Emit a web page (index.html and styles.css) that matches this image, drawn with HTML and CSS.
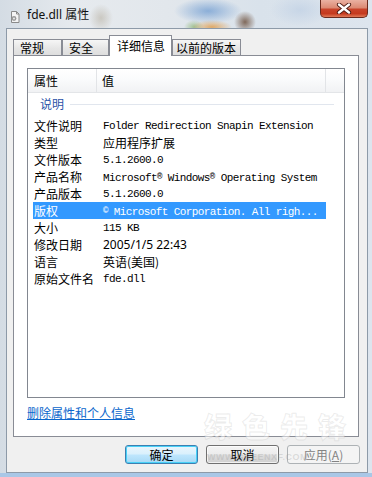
FILE: index.html
```html
<!DOCTYPE html>
<html lang="zh-CN">
<head>
<meta charset="utf-8">
<title>fde.dll 属性</title>
<link rel="stylesheet" href="styles.css">
</head>
<body>
<div class="window">
  <div class="titlebar">
    <svg class="ticon" width="12" height="12" viewBox="0 0 12 12">
      <path d="M2.5 0.5h5l2.5 2.5v8.5h-7.5z" fill="#f4f4f4" stroke="#8a8a8a"/>
      <path d="M7.5 0.5v2.5h2.5" fill="none" stroke="#8a8a8a"/>
      <circle cx="5" cy="7.5" r="2.4" fill="#9a9a9a"/>
      <circle cx="5" cy="7.5" r="0.9" fill="#f4f4f4"/>
    </svg>
    <span class="title">fde.dll 属性</span>
    <div class="close">
      <svg width="16" height="11" viewBox="0 0 16 11">
        <path d="M3 1.5l10 8M13 1.5l-10 8" stroke="#4a1810" stroke-width="4.2" stroke-linecap="round"/>
        <path d="M3 1.5l10 8M13 1.5l-10 8" stroke="#ffffff" stroke-width="2.4" stroke-linecap="round"/>
      </svg>
    </div>
  </div>
  <div class="client">
    <div class="tabs">
      <div class="tab t1">常规</div>
      <div class="tab t2">安全</div>
      <div class="tab sel t3">详细信息</div>
      <div class="tab t4">以前的版本</div>
    </div>
    <div class="panel">
      <div class="list">
        <div class="lhead">
          <div class="hc hc1">属性</div>
          <div class="hc hc2">值</div>
          <div class="hc hc3"></div>
        </div>
        <div class="group"><span class="gtext">说明</span><span class="gline"></span></div>
        <div class="row"><div class="k">文件说明</div><div class="v mono">Folder Redirection Snapin Extension</div></div>
        <div class="row"><div class="k">类型</div><div class="v cjk">应用程序扩展</div></div>
        <div class="row"><div class="k">文件版本</div><div class="v mono">5.1.2600.0</div></div>
        <div class="row"><div class="k">产品名称</div><div class="v mono">Microsoft<span class="reg">®</span> Windows<span class="reg">®</span> Operating System</div></div>
        <div class="row"><div class="k">产品版本</div><div class="v mono">5.1.2600.0</div></div>
        <div class="row selrow"><div class="k">版权</div><div class="v mono"><span class="reg">©</span> Microsoft Corporation. All righ...</div></div>
        <div class="row"><div class="k">大小</div><div class="v mono">115 KB</div></div>
        <div class="row"><div class="k">修改日期</div><div class="v sans">2005/1/5 22:43</div></div>
        <div class="row"><div class="k">语言</div><div class="v cjk">英语(美国)</div></div>
        <div class="row"><div class="k">原始文件名</div><div class="v mono">fde.dll</div></div>
      </div>
      <a class="link" href="#">删除属性和个人信息</a>
    </div>
    <div class="buttons">
      <div class="btn default">确定</div>
      <div class="btn">取消</div>
      <div class="btn disabled">应用(<u>A</u>)</div>
    </div>
  </div>
  <div class="watermark">绿色先锋</div>
  <div class="watermark2">WWW.GREENXF.COM</div>
</div>
</body>
</html>
```
FILE: styles.css
```css
html, body {
  margin: 0;
  padding: 0;
}
body {
  width: 372px;
  height: 477px;
  overflow: hidden;
  font-family: "Noto Sans CJK SC", "Noto Sans", sans-serif;
  font-size: 12px;
  color: #000;
}
.window {
  position: relative;
  width: 372px;
  height: 477px;
  display: flex;
  flex-direction: column;
  background:
    linear-gradient(to bottom, transparent 473px, #a9c7e6 473px),
    radial-gradient(ellipse 11px 11px at 245px 22px, rgba(105,75,55,0.8), rgba(105,75,55,0)),
    radial-gradient(ellipse 20px 7px at 212px 27px, rgba(225,150,60,0.75), rgba(225,150,60,0)),
    radial-gradient(ellipse 10px 7px at 194px 27px, rgba(120,170,90,0.6), rgba(120,170,90,0)),
    radial-gradient(ellipse 34px 13px at 208px 11px, rgba(95,145,205,0.65), rgba(95,145,205,0)),
    radial-gradient(ellipse 12px 14px at 101px 18px, rgba(170,160,140,0.45), rgba(170,160,140,0)),
    radial-gradient(ellipse 30px 16px at 300px 10px, rgba(180,200,225,0.5), rgba(180,200,225,0)),
    linear-gradient(to right, #d4dce4, #e6eaee 20%, #e2e7ec 45%, #d9e2eb 70%, #dde5ee);
}
.titlebar {
  height: 28px;
  display: flex;
  align-items: flex-start;
}
.ticon {
  margin: 11px 0 0 9px;
}
.title {
  margin: 6px 0 0 6px;
  font-family: "Noto Sans", "Noto Sans CJK SC", sans-serif;
  font-size: 12px;
  line-height: 18px;
  color: #111;
}
.close {
  margin-left: auto;
  margin-right: 4px;
  width: 48px;
  height: 18px;
  box-sizing: border-box;
  border: 1px solid #6a2a1e;
  border-top: none;
  border-radius: 0 0 5px 5px;
  background: linear-gradient(to bottom, #eab1a2 0%, #dc8a74 45%, #c8432a 55%, #c53a1f 80%, #e07a58 100%);
  display: flex;
  align-items: center;
  justify-content: center;
}
.client {
  margin-left: 6px;
  width: 362px;
  height: 445px;
  box-sizing: border-box;
  border: 1px solid #8d9aa8;
  background: #f0f0f0;
  padding: 6px 7px 8px 0;
  display: flex;
  flex-direction: column;
}
.tabs {
  height: 20px;
  margin-left: 6px;
  display: flex;
  align-items: flex-end;
}
.tab {
  height: 16px;
  box-sizing: border-box;
  border: 1px solid #898c95;
  border-bottom: none;
  background: linear-gradient(to bottom, #f6f6f6, #e6e6e6 55%, #dedede);
  padding-left: 6px;
  font-size: 12px;
  line-height: 15px;
  white-space: nowrap;
}
.t1 { width: 49px; }
.t2 { width: 47px; }
.t3 { width: 63px; }
.t4 { width: 69px; padding-left: 3px; }
.tab.sel {
  height: 21px;
  margin-bottom: -1px;
  background: #ffffff;
  padding-left: 7px;
  padding-top: 2px;
  line-height: 16px;
  position: relative;
  z-index: 1;
}
.panel {
  width: 346px;
  height: 382px;
  margin-left: 6px;
  box-sizing: border-box;
  border: 1px solid #898c95;
  background: #ffffff;
  padding: 12px 0 0 13px;
  display: flex;
  flex-direction: column;
  align-items: flex-start;
}
.list {
  width: 318px;
  height: 330px;
  box-sizing: border-box;
  border: 1px solid #828790;
  background: #ffffff;
  display: flex;
  flex-direction: column;
}
.lhead {
  height: 24px;
  box-sizing: border-box;
  border-bottom: 1px solid #e3e5e8;
  background: linear-gradient(to bottom, #ffffff 0%, #fafbfc 45%, #f1f2f4 100%);
  display: flex;
}
.hc {
  line-height: 23px;
  font-size: 12px;
  box-sizing: border-box;
}
.hc1 {
  width: 69px;
  padding-left: 6px;
  border-right: 1px solid #e2e4e7;
}
.hc2 {
  width: 229px;
  padding-left: 5px;
  border-right: 1px solid #e2e4e7;
}
.hc3 {
  flex: 1;
}
.group {
  height: 24px;
  box-sizing: border-box;
  padding: 0 10px 2px 12px;
  display: flex;
  align-items: center;
}
.gtext {
  color: #2a52a8;
  font-size: 12px;
  line-height: 16px;
}
.gline {
  flex: 1;
  height: 1px;
  margin-left: 6px;
  background: #e1e6ee;
}
.row {
  margin-left: 5px;
  width: 293px;
  height: 17px;
  display: flex;
  align-items: center;
  white-space: nowrap;
  overflow: hidden;
}
.k {
  width: 64px;
  padding-left: 1px;
  box-sizing: border-box;
  font-size: 12px;
  line-height: 17px;
}
.v {
  padding-left: 6px;
  line-height: 17px;
}
.mono {
  font-family: "Liberation Mono", monospace;
  font-size: 11px;
  letter-spacing: -0.6px;
  padding-top: 2px;
}
.reg {
  font-size: 9px;
  vertical-align: 2px;
}
.cjk {
  font-family: "Noto Sans CJK SC", sans-serif;
  font-size: 12px;
}
.sans {
  font-family: "Noto Sans", sans-serif;
  font-size: 12px;
}
.selrow {
  background: #3399ff;
  color: #ffffff;
}
.link {
  margin-top: 7px;
  font-size: 12px;
  line-height: 16px;
  color: #0a66cc;
  text-decoration: underline;
}
.buttons {
  margin-top: 8px;
  display: flex;
  justify-content: flex-end;
  gap: 8px;
}
.btn {
  width: 73px;
  height: 19px;
  box-sizing: border-box;
  border: 1px solid #707070;
  border-radius: 3px;
  background: linear-gradient(to bottom, #f4f4f4 0%, #ececec 48%, #dddddd 52%, #d0d0d0 100%);
  text-align: center;
  font-size: 12px;
  line-height: 17px;
  box-shadow: inset 0 0 0 1px rgba(255,255,255,0.7);
}
.btn.default {
  border-color: #3c7fb1;
  background: linear-gradient(to bottom, #eaf6fd 0%, #d9f0fc 48%, #bee6fd 52%, #a7d9f5 100%);
  box-shadow: inset 0 0 0 1px #48d1f7;
}
.btn.disabled {
  border-color: #adb2b5;
  background: #f4f4f4;
  color: #838383;
  box-shadow: none;
}
.btn u {
  text-decoration: underline;
}
.watermark {
  position: absolute;
  left: 204px;
  top: 410px;
  font-family: "Noto Sans CJK SC", sans-serif;
  font-weight: 900;
  font-size: 28px;
  line-height: 32px;
  letter-spacing: 10px;
  color: rgba(255,255,255,0.5);
  -webkit-text-stroke: 1px rgba(170,170,170,0.22);
  pointer-events: none;
}
.watermark2 {
  position: absolute;
  left: 207px;
  top: 452px;
  font-family: "Liberation Sans", sans-serif;
  font-weight: bold;
  font-size: 9px;
  line-height: 11px;
  letter-spacing: 0.5px;
  color: rgba(150,150,150,0.28);
  pointer-events: none;
}
```
